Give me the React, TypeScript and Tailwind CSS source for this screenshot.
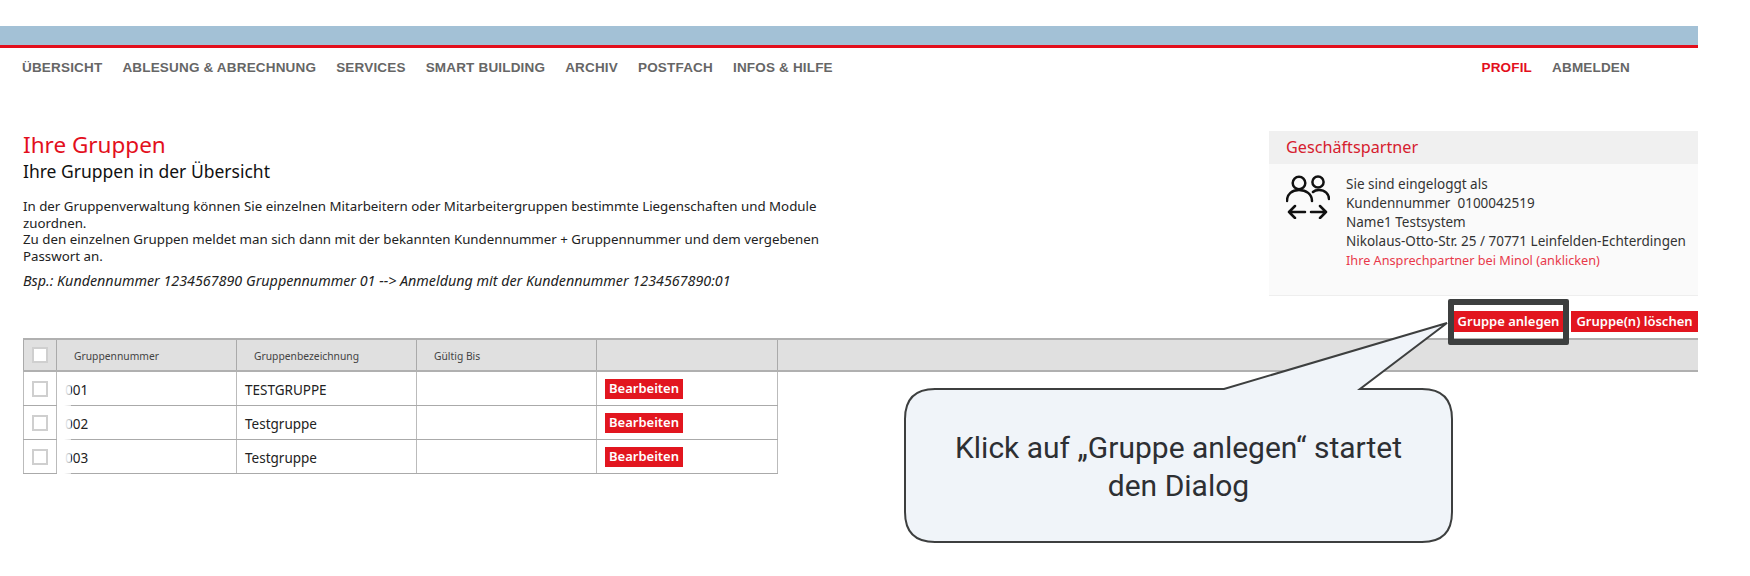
const navItems = ["ÜBERSICHT", "ABLESUNG & ABRECHNUNG", "SERVICES", "SMART BUILDING", "ARCHIV", "POSTFACH", "INFOS & HILFE"];

const rows = [
  { nr: "001", name: "TESTGRUPPE" },
  { nr: "002", name: "Testgruppe" },
  { nr: "003", name: "Testgruppe" },
];

function PartnerIcon() {
  return (
    <svg width="44" height="44" viewBox="0 0 44 44" fill="none" stroke="#111" strokeWidth="2.5" strokeLinecap="round" strokeLinejoin="round">
      <circle cx="13" cy="8" r="6.3" />
      <path d="M1 26C1 19 6 15 13 15C20 15 26 19 26 26" />
      <circle cx="32" cy="7" r="5.6" />
      <path d="M27 17C29 15 31 15 33 15C39 15 43 19 43 24" />
      <path d="M19 37H3M9 31L3 37L9 43" />
      <path d="M25 37H40M34 31L40 37L34 43" />
    </svg>
  );
}

function Checkbox() {
  return <span className="block h-[16px] w-[16px] border-2 border-[#cfcfcf] bg-white" />;
}

export default function App() {
  return (
    <div className="relative h-[576px] w-[1750px] overflow-hidden bg-white font-['Noto_Sans',sans-serif] text-[#222]">
      <div className="w-[1698px] pt-[26px]">
        <div className="h-[19px] bg-[#a3c1d6]" />
        <div className="h-[3px] bg-[#e30f1c]" />

        <nav className="flex h-[40px] items-center justify-between pl-[22px] pr-[68px] font-['Liberation_Sans',sans-serif] text-[13.5px] font-bold tracking-[0.18px] text-[#666]">
          <div className="flex gap-[20px]">
            {navItems.map((item) => (
              <span key={item}>{item}</span>
            ))}
          </div>
          <div className="flex gap-[20px]">
            <span className="text-[#e30f1c]">PROFIL</span>
            <span>ABMELDEN</span>
          </div>
        </nav>

        <div className="mt-[43px] flex items-start justify-between">
          <section className="w-[830px] pl-[23px]">
            <h1 className="text-[22.5px] leading-[28px] text-[#e30f1c]">Ihre Gruppen</h1>
            <h2 className="text-[17.5px] leading-[24px] text-[#111]">Ihre Gruppen in der Übersicht</h2>
            <p className="mt-[15px] text-[13.3px] leading-[16.7px] text-[#222]">
              In der Gruppenverwaltung können Sie einzelnen Mitarbeitern oder Mitarbeitergruppen bestimmte Liegenschaften und Module zuordnen.
              <br />
              Zu den einzelnen Gruppen meldet man sich dann mit der bekannten Kundennummer + Gruppennummer und dem vergebenen Passwort an.
            </p>
            <p className="mt-[7px] text-[14.3px] italic leading-[17px] text-[#222]">
              Bsp.: Kundennummer 1234567890 Gruppennummer 01 --&gt; Anmeldung mit der Kundennummer 1234567890:01
            </p>
          </section>

          <aside className="h-[165px] w-[429px] border-b border-[#eeeeee] bg-[#fafafa]">
            <div className="flex h-[33px] items-center bg-[#f0f0f0] pl-[17px] text-[16.2px] text-[#d6202e]">Geschäftspartner</div>
            <div className="flex pl-[17px] pt-[11px]">
              <PartnerIcon />
              <div className="ml-[16px] text-[13.5px] leading-[19px] text-[#333]">
                <div>Sie sind eingeloggt als</div>
                <div className="whitespace-pre">Kundennummer  0100042519</div>
                <div>Name1 Testsystem</div>
                <div>Nikolaus-Otto-Str. 25 / 70771 Leinfelden-Echterdingen</div>
                <div className="text-[12.7px] leading-[18px] text-[#e8394a]">Ihre Ansprechpartner bei Minol (anklicken)</div>
              </div>
            </div>
          </aside>
        </div>

        <div className="relative z-10 mt-[15px] flex justify-end gap-[8px] text-[13px] font-semibold text-white">
          <button className="relative flex h-[21px] w-[109px] items-center justify-center bg-[#e2161f]">
            Gruppe anlegen
            <span className="absolute -bottom-[13px] -left-[6px] -right-[6px] -top-[12px] rounded-[2px] border-[6px] border-[#3d3f3f]" />
          </button>
          <button className="flex h-[21px] w-[127px] items-center justify-center bg-[#e2161f]">Gruppe(n) löschen</button>
        </div>

        <div className="relative ml-[23px] mt-[6px] text-[13.5px]">
          <div className="flex h-[34px] items-center border-y-2 border-[#b0b0b0] bg-[#e0e0e0] text-[10.3px] text-[#444]">
            <div className="flex h-full w-[34px] items-center justify-center border-x border-[#aaaaaa]">
              <Checkbox />
            </div>
            <div className="flex h-full w-[180px] items-center border-r border-[#aaaaaa] pl-[17px] pt-[3px]">Gruppennummer</div>
            <div className="flex h-full w-[180px] items-center border-r border-[#aaaaaa] pl-[17px] pt-[3px]">Gruppenbezeichnung</div>
            <div className="flex h-full w-[180px] items-center border-r border-[#aaaaaa] pl-[17px] pt-[3px]">Gültig Bis</div>
            <div className="h-full w-[181px] border-r border-[#aaaaaa]" />
          </div>
          {rows.map((row) => (
            <div key={row.nr} className="flex h-[34px] w-[755px] items-center border-b border-[#aaaaaa]">
              <div className="flex h-full w-[34px] items-center justify-center border-x border-[#bbbbbb]">
                <Checkbox />
              </div>
              <div className="flex h-full w-[180px] items-center border-r border-[#bbbbbb] pl-[8px] pt-[4px]">{row.nr}</div>
              <div className="flex h-full w-[180px] items-center border-r border-[#bbbbbb] pl-[8px] pt-[4px]">{row.name}</div>
              <div className="h-full w-[180px] border-r border-[#bbbbbb]" />
              <div className="flex h-full w-[181px] items-center border-r border-[#bbbbbb] pl-[8px]">
                <button className="flex h-[20px] w-[78px] items-center justify-center bg-[#e2161f] text-[13px] font-semibold text-white">Bearbeiten</button>
              </div>
            </div>
          ))}
          <div className="absolute bottom-0 left-[34px] top-[35px] w-[14px] bg-linear-to-r from-white via-white to-white/60" />
        </div>
      </div>

      <svg className="absolute left-[900px] top-[320px]" width="556" height="226" viewBox="900 320 556 226" fill="#f0f4f9" stroke="#3d3f3f" strokeWidth="2">
        <path d="M935 389H1224L1447 323L1360 389H1422Q1452 389 1452 419V512Q1452 542 1422 542H935Q905 542 905 512V419Q905 389 935 389Z" />
      </svg>
      <div className="absolute left-[905px] top-[389px] flex h-[153px] w-[547px] items-center justify-center pt-[2px] text-center font-['Roboto',sans-serif] text-[30px] leading-[38px] text-[#2d2f33]">
        <span className="w-[460px]">Klick auf „Gruppe anlegen“ startet den Dialog</span>
      </div>
    </div>
  );
}
